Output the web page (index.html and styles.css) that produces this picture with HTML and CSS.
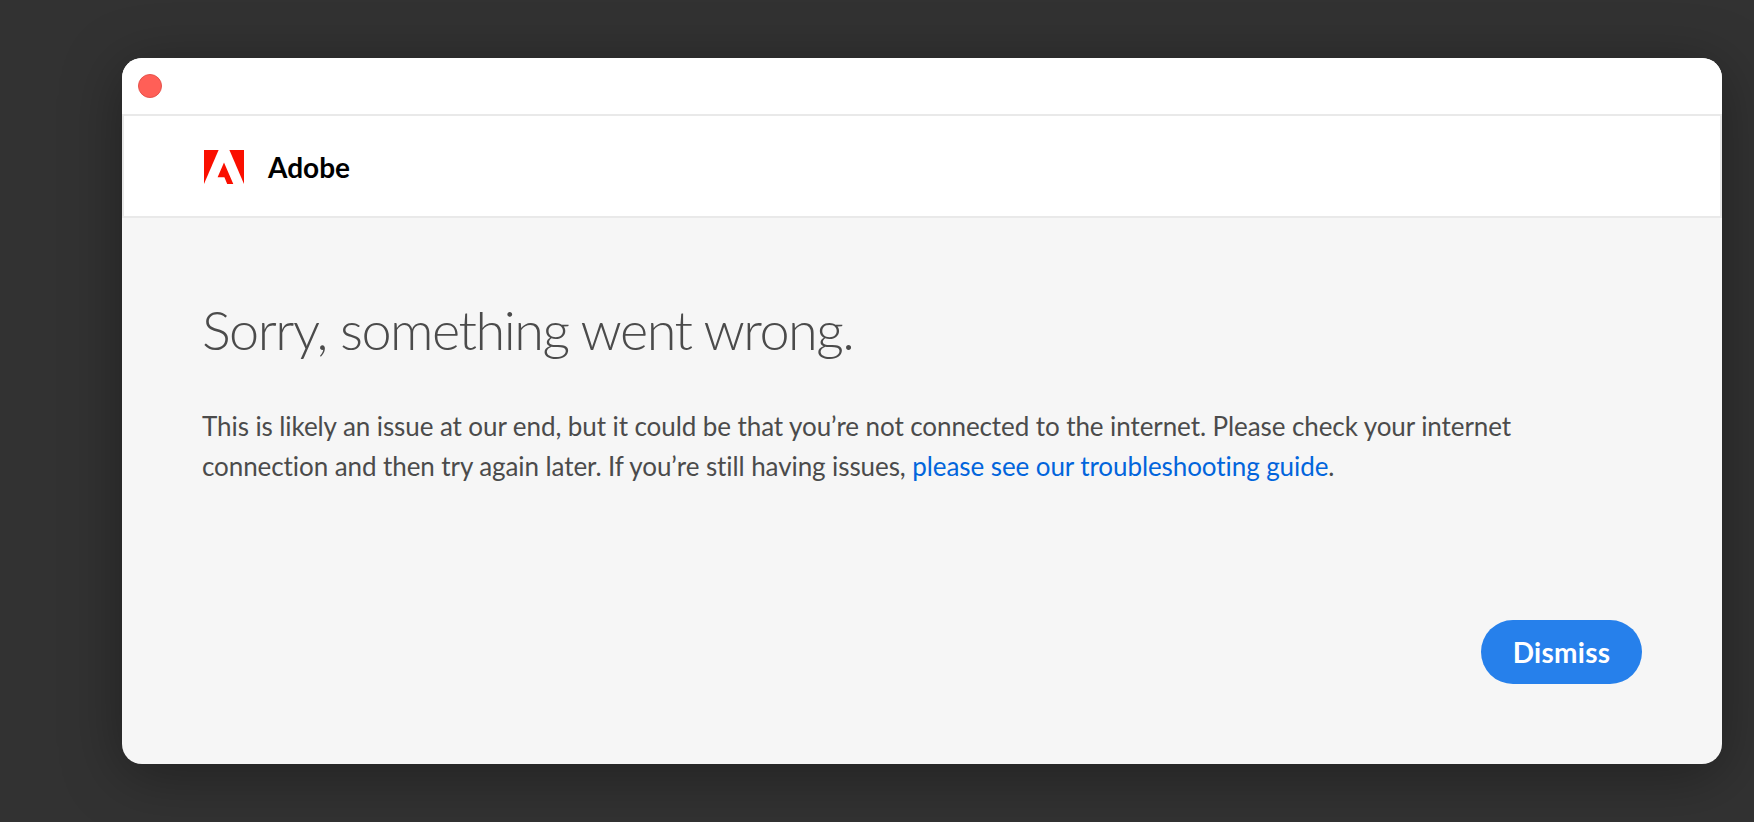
FILE: index.html
```html
<!DOCTYPE html>
<html lang="en">
<head>
  <meta charset="UTF-8" />
  <title>Adobe - Error</title>
  <link rel="stylesheet" href="styles.css">
</head>
<body>

  <div class="window">
    <!-- Title bar -->
    <div class="titlebar">
      <span class="close-btn"></span>
    </div>

    <!-- Brand -->
    <div class="brand">
      <svg class="brand-logo" viewBox="0 0 40 34" width="40" height="34" aria-hidden="true">
        <polygon fill="#fa0f00" points="0,0 14.6,0 0,34"/>
        <polygon fill="#fa0f00" points="25.4,0 40,0 40,34"/>
        <polygon fill="#fa0f00" points="20,12.6 29.3,34 23.2,34 20.4,27.2 13.6,27.2"/>
      </svg>
      <span class="brand-name">Adobe</span>
    </div>

    <!-- Message -->
    <div class="content">
      <h1>Sorry, something went wrong.</h1>
      <p>This is likely an issue at our end, but it could be that you’re not connected to the internet. Please check your internet connection and then try again later. If you’re still having issues, <a href="#">please see our troubleshooting guide</a>.</p>
      <div class="actions">
        <button type="button">Dismiss</button>
      </div>
    </div>
  </div>

</body>
</html>
```

FILE: styles.css
```css
* {
  margin: 0;
  box-sizing: border-box;
  font-family: 'Lato', sans-serif;
  font-variant-ligatures: none;
}

body {
  height: 100vh;
  overflow: hidden;
  background: #323232;
  padding: 58px 32px 58px 122px;
}

/* Window */
.window {
  height: 706px;
  display: flex;
  flex-direction: column;
  background: #f6f6f6;
  border-radius: 20px;
  overflow: hidden;
  box-shadow: 0 10px 60px rgba(0, 0, 0, 0.35);
}

.titlebar {
  height: 58px;
  flex: none;
  display: flex;
  align-items: center;
  padding: 0 16px;
  background: white;
  border-bottom: 2px solid #e9e9e9;
}

.close-btn {
  width: 24px;
  height: 24px;
  border-radius: 50%;
  background: #ff5f57;
  border: 1px solid #e5534c;
}

/* Brand row */
.brand {
  height: 102px;
  flex: none;
  display: flex;
  align-items: center;
  gap: 24px;
  padding: 2px 80px 0;
  background: white;
  border: 2px solid #e9e9e9;
  border-top: none;
}

.brand-name {
  font-size: 28px;
  font-weight: 700;
  color: black;
}

/* Message */
.content {
  flex: 1;
  display: flex;
  flex-direction: column;
  padding: 79px 80px 80px 80px;
}

h1 {
  font-size: 54px;
  font-weight: 300;
  line-height: 66px;
  letter-spacing: -1.5px;
  color: #4b4b4b;
}

p {
  margin-top: 43px;
  width: 1340px;
  font-size: 26px;
  line-height: 40px;
  letter-spacing: -0.08px;
  color: #4b4b4b;
}

a {
  color: #0265dc;
  text-decoration: none;
}

.actions {
  margin-top: auto;
  display: flex;
  justify-content: flex-end;
}

button {
  width: 161px;
  height: 64px;
  background-color: #2680eb;
  color: white;
  border: none;
  border-radius: 32px;
  font-size: 28px;
  font-weight: 700;
  letter-spacing: 0.3px;
  cursor: pointer;
}
```
